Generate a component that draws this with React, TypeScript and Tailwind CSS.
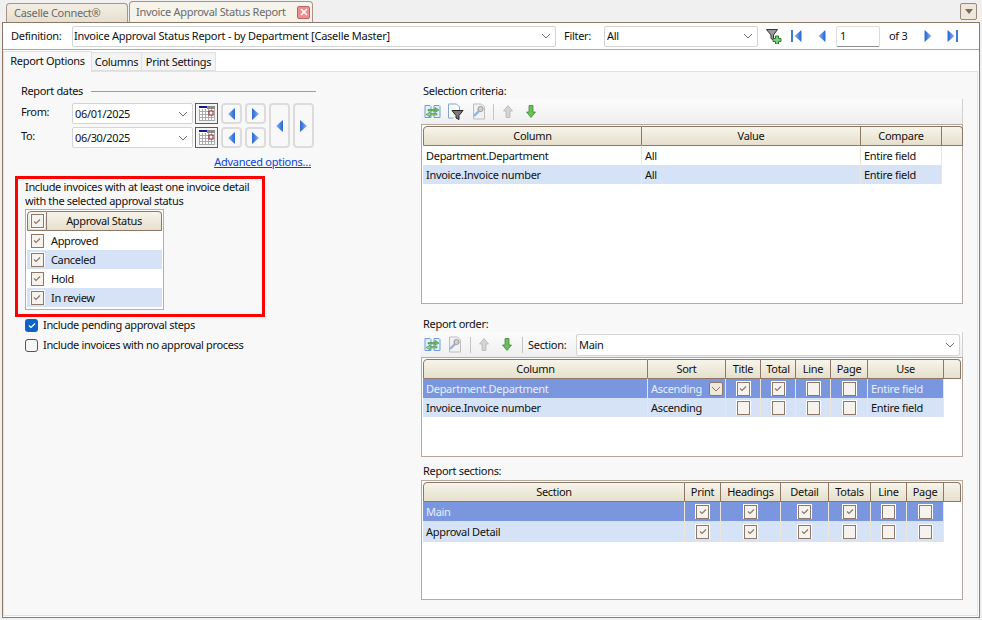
import React from "react";

const Tri = ({ dir, w = 8, h = 14 }: { dir: "l" | "r"; w?: number; h?: number }) => (
  <svg width={w} height={h} viewBox="0 0 8 14" className="block">
    <defs>
      <linearGradient id="triL" x1="0" x2="1" y1="0" y2="0">
        <stop offset="0" stopColor="#8db4f2" />
        <stop offset="1" stopColor="#1f62d6" />
      </linearGradient>
      <linearGradient id="triR" x1="0" x2="1" y1="0" y2="0">
        <stop offset="0" stopColor="#1f62d6" />
        <stop offset="1" stopColor="#8db4f2" />
      </linearGradient>
    </defs>
    {dir === "l" ? <polygon points="8,0 8,14 0,7" fill="url(#triL)" /> : <polygon points="0,0 0,14 8,7" fill="url(#triR)" />}
  </svg>
);

const Chevron = ({ color = "#6b6b6b" }: { color?: string }) => (
  <svg width="10" height="6" viewBox="0 0 10 6" className="block">
    <path d="M1 1l4 4 4-4" fill="none" stroke={color} strokeWidth="1" />
  </svg>
);

const Select = ({ children, className }: { children: React.ReactNode; className: string }) => (
  <div className={`flex items-center justify-between border border-[#d4d4d4] rounded-[2px] bg-white pr-[4px] ${className}`}>
    <span className="truncate">{children}</span>
    <Chevron />
  </div>
);

const Check = ({ on = false }: { on?: boolean }) => (
  <span className="inline-flex items-center justify-center size-[15px] border border-white bg-white">
    <span className="flex items-center justify-center size-[14px] border border-[#8d7868] bg-[#f6f3ef]">
      {on && (
        <svg width="8" height="7" viewBox="0 0 8 7" className="block">
          <path d="M1 3.5l2 2 4-4" fill="none" stroke="#8d7868" strokeWidth="1.2" />
        </svg>
      )}
    </span>
  </span>
);

const CalIcon = () => (
  <div className="flex items-center justify-center w-[23px] h-[21px] border border-[#5c5c5c] bg-[#f4f4f4]">
    <svg width="16" height="15" viewBox="0 0 16 15" className="block">
      <rect x="0" y="0" width="16" height="15" fill="#fff" />
      <rect x="0" y="0" width="8" height="2" fill="#1a1a8c" />
      <rect x="8" y="0" width="8" height="3" fill="#8a8a8a" />
      <path d="M0.5 3v12M3.5 3v12M6.5 3v12M9.5 3v12M12.5 3v12M15.5 3v12M0 5.5h16M0 8.5h16M0 11.5h16M0 14.5h16" stroke="#a8a8a8" strokeWidth="1" />
      <rect x="10" y="5" width="4" height="4" fill="#fff" stroke="#8b1a1a" strokeWidth="1" />
    </svg>
  </div>
);

const ArrowBtn = ({ dir, big = false }: { dir: "l" | "r"; big?: boolean }) => (
  <div className={`flex items-center justify-center border-2 border-[#dcdcdc] rounded-[4px] ${big ? "w-[21px] h-[45px]" : "w-[21px] h-[21px]"}`}>
    <Tri dir={dir} w={7} h={12} />
  </div>
);

const ImportIcon = () => (
  <svg width="17" height="15" viewBox="0 0 17 15" className="block">
    <path d="M1 1.5h5l1 1v11H1zM10 1.5h5l1 1v11h-6z" fill="#e3eefb" stroke="#6f9fd8" strokeWidth="1" />
    <path d="M4 5.5h7V3.5L15 6l-4 2.5v-1.5H4z" fill="#6cc05a" stroke="#2e7d32" strokeWidth=".5" />
    <path d="M13 9.5H6V8l-4 2.5L6 13v-2h7z" fill="#8ed47e" stroke="#2e7d32" strokeWidth=".5" />
  </svg>
);

const FilterPageIcon = () => (
  <svg width="17" height="17" viewBox="0 0 17 17" className="block">
    <path d="M1.5 1h8l3 3v5M1.5 1v14h5" fill="#fff" stroke="#7fa6dc" strokeWidth="1" />
    <path d="M5 7.5h11l-4 5v4l-3-1.5v-2.5z" fill="#7a7a7a" stroke="#222" strokeWidth="1" />
  </svg>
);

const KeyPageIcon = () => (
  <svg width="16" height="17" viewBox="0 0 16 17" className="block">
    <path d="M2.5 1h8l3 3v12h-11z" fill="#f2f2f2" stroke="#bdbdbd" strokeWidth="1" />
    <path d="M3 13l5-5" stroke="#8fb1e6" strokeWidth="2.4" />
    <circle cx="9.5" cy="6" r="2.6" fill="#d0d0d0" stroke="#9a9a9a" strokeWidth="1" />
  </svg>
);

const VArrow = ({ up, color, stroke }: { up?: boolean; color: string; stroke: string }) => (
  <svg width="10" height="13" viewBox="0 0 10 13" className="block">
    <path d={up ? "M5 .5L9.5 6H7v6.5H3V6H.5z" : "M5 12.5L9.5 7H7V.5H3V7H.5z"} fill={color} stroke={stroke} strokeWidth=".7" />
  </svg>
);

const Sep = ({ cls }: { cls: string }) => <div className={`w-px h-[16px] bg-[#c4c4c4] ${cls}`} />;

const HCell = ({ children, cls = "" }: { children?: React.ReactNode; cls?: string }) => (
  <div className={`flex items-center justify-center h-[20px] border-r border-b border-[#8d7868] bg-gradient-to-b from-[#f7f4ea] to-[#e6dfcc] ${cls}`}>{children}</div>
);

const Cell = ({ children, sel, center }: { children?: React.ReactNode; sel?: boolean; center?: boolean }) => (
  <div className={`flex items-center min-h-[19px] border-r border-[#ece6d8] ${center ? "justify-center" : "pl-[3px]"} ${sel ? "text-[#e9effc]" : ""}`}>{children}</div>
);

const Row = ({ cols, kind, tall, children }: { cols: string; kind: "w" | "a" | "s"; tall?: boolean; children: React.ReactNode }) => (
  <div className={`grid ${cols} ${tall ? "h-[21px]" : "h-[19px]"} ${kind === "a" ? "bg-[#d6e3f6]" : kind === "s" ? "bg-[#7a96de]" : "bg-white"}`}>{children}</div>
);

const Toolbar = ({ children }: { children: React.ReactNode }) => (
  <div className="flex items-center h-[25px] pl-[3px] border-r border-[#d0d0d0] bg-gradient-to-b from-[#fcfcfc] to-[#efefef]">{children}</div>
);

const Table = ({ h, children }: { h: string; children: React.ReactNode }) => (
  <div className={`border border-[#b6a99e] bg-white pl-px pt-px ${h}`}>{children}</div>
);

const sc = "grid-cols-[219px_219px_81px_21px]";
const oc = "grid-cols-[225px_78px_35px_35px_35px_37px_76px_17px]";
const rc = "grid-cols-[262px_36px_60px_48px_42px_36px_37px_17px]";

export default function App() {
  return (
    <div className="relative w-[982px] h-[620px] overflow-hidden bg-[#f0f0f0] text-[11px] leading-[14px] text-[#111] font-['Noto_Sans',sans-serif] tracking-[-0.3px]">
      <div className="flex items-end h-[22px] pl-[6px]">
        <div className="flex items-center w-[122px] h-[19px] pl-[7px] border border-b-0 border-[#a89484] rounded-t-[4px] bg-gradient-to-b from-[#f3efe4] to-[#e6dfcf] text-[#6a6a6a] whitespace-nowrap">Caselle Connect®</div>
        <div className="flex items-center w-[184px] h-[21px] ml-px pl-[6px] border border-b-0 border-[#a89484] rounded-t-[4px] bg-[#f6f3ea] text-[#6a6a6a] whitespace-nowrap">
          <span>Invoice Approval Status Report</span>
          <span className="flex items-center justify-center ml-auto mr-[2px] size-[13px] rounded-[2px] border border-[#b76a6a] bg-[#f28c8c]">
            <svg width="8" height="8" viewBox="0 0 8 8"><path d="M1 1l6 6M7 1l-6 6" stroke="#fff" strokeWidth="1.6" /></svg>
          </span>
        </div>
        <div className="flex items-center justify-center w-[17px] h-[17px] ml-auto mr-[5px] mb-[2px] border border-[#9b8878] rounded-[2px] bg-[#eee8da]">
          <svg width="8" height="5" viewBox="0 0 8 5"><polygon points="0,0 8,0 4,5" fill="#7d6a5c" /></svg>
        </div>
      </div>

      <div className="mx-[2px] h-[596px] border border-[#8d7868] bg-white flex flex-col">
        <div className="flex items-center h-[27px] border-b border-[#a8a8a8] pl-[8px] shrink-0">
          <span className="w-[61px]">Definition:</span>
          <Select className="w-[484px] h-[21px] pl-[1px] tracking-[-0.25px]">Invoice Approval Status Report - by Department [Caselle Master]</Select>
          <span className="w-[40px] ml-[8px]">Filter:</span>
          <Select className="w-[154px] h-[21px] pl-[2px]">All</Select>
          <span className="ml-[8px]">
            <svg width="16" height="16" viewBox="0 0 16 16" className="block">
              <path d="M.5 1.5h11L7.5 7v5L5 10.5V7z" fill="#9a9a9a" stroke="#333" strokeWidth="1" />
              <path d="M9.5 8h3v2.5H15v3h-2.5V16h-3v-2.5H7v-3h2.5z" fill="#7fce7f" stroke="#2c7a2c" strokeWidth="1" />
            </svg>
          </span>
          <span className="flex items-center ml-[9px]"><span className="w-[2px] h-[12px] mr-[1px] bg-[#3f79dc]" /><Tri dir="l" w={8} h={12} /></span>
          <span className="ml-[16px]"><Tri dir="l" w={8} h={12} /></span>
          <span className="flex items-center w-[44px] h-[21px] ml-[10px] pl-[3px] border border-[#dcdcdc] border-b-[#8c8c8c] rounded-[2px]">1</span>
          <span className="ml-[9px]">of 3</span>
          <span className="ml-[17px]"><Tri dir="r" w={8} h={12} /></span>
          <span className="flex items-center ml-[15px]"><Tri dir="r" w={8} h={12} /><span className="w-[2px] h-[12px] ml-px bg-[#3f79dc]" /></span>
        </div>

        <div className="flex items-end h-[21px] shrink-0">
          <div className="flex items-start justify-center pt-[2px] w-[89px] h-[21px] relative top-px z-10 border border-b-0 border-[#e0e0e0] bg-[#f8f8f8]">Report Options</div>
          <div className="flex items-center justify-center w-[50px] h-[19px] border border-[#e0e0e0] border-l-0 bg-[#f3f3f3]">Columns</div>
          <div className="flex items-center justify-center w-[74px] h-[19px] border border-[#e0e0e0] border-l-0 bg-[#f3f3f3]">Print Settings</div>
        </div>

        <div className="flex flex-1 min-h-0 mr-[1px] mb-[1px] border border-[#e2e2e2] bg-[#f8f8f8]">
          <div className="w-[417px] shrink-0 tracking-[-0.35px]">
            <div className="flex items-center mt-[12px] ml-[17px] h-[14px]">
              <span>Report dates</span>
              <span className="flex-1 h-px ml-[8px] mr-[105px] bg-[#9d9d9d]" />
            </div>
            <div className="flex mt-[5px] ml-[17px]">
              <div className="flex flex-col gap-[3px] w-[51px] pt-[2px]">
                <span className="h-[21px]">From:</span>
                <span className="h-[21px]">To:</span>
              </div>
              <div className="flex flex-col gap-[3px]">
                {["06/01/2025", "06/30/2025"].map((d) => (
                  <div key={d} className="flex items-center">
                    <Select className="w-[121px] h-[21px] mr-[2px] pl-[2px]">{d}</Select>
                    <CalIcon />
                    <div className="flex gap-[3px] ml-[3px]">
                      <ArrowBtn dir="l" />
                      <ArrowBtn dir="r" />
                    </div>
                  </div>
                ))}
              </div>
              <div className="flex gap-[3px] ml-[3px]">
                <ArrowBtn dir="l" big />
                <ArrowBtn dir="r" big />
              </div>
            </div>
            <div className="mt-[5px] ml-[207px] w-[100px] text-right text-[#0b3fd8] underline whitespace-nowrap tracking-[-0.25px]">Advanced options…</div>

            <div className="w-[250px] h-[141px] mt-[7px] ml-[11px] border-[3px] border-[#ff0000] pl-[7px] pt-px">
              <div>Include invoices with at least one invoice detail</div>
              <div>with the selected approval status</div>
              <div className="w-[139px] h-[101px] mt-[1px] border border-[#b8ad9f] bg-white p-px">
                <div className="grid grid-cols-[20px_1fr]">
                  <HCell cls="rounded-tl-[4px] border-l border-t"><Check on /></HCell>
                  <HCell cls="rounded-tr-[4px] border-t">Approval Status</HCell>
                </div>
                {["Approved", "Canceled", "Hold", "In review"].map((s, i) => (
                  <div key={s} className={`grid grid-cols-[20px_1fr] ${i % 2 ? "bg-[#d6e3f6]" : "bg-white"}`}>
                    <div className="flex items-center justify-center h-[19px]"><Check on /></div>
                    <div className="flex items-center h-[19px] pl-[4px]">{s}</div>
                  </div>
                ))}
              </div>
            </div>

            <div className="flex items-center h-[14px] mt-[1px] ml-[21px]">
              <span className="flex items-center justify-center size-[13px] rounded-[3px] bg-[#0f63c8]">
                <svg width="8" height="7" viewBox="0 0 8 7"><path d="M1 3.5l2 2 4-4" fill="none" stroke="#fff" strokeWidth="1.2" /></svg>
              </span>
              <span className="ml-[5px]">Include pending approval steps</span>
            </div>
            <div className="flex items-center h-[14px] mt-[6px] ml-[21px]">
              <span className="size-[13px] rounded-[3px] border border-[#555] bg-[#f6f6f6]" />
              <span className="ml-[5px]">Include invoices with no approval process</span>
            </div>
          </div>

          <div className="w-[542px] shrink-0">
            <div className="mt-[12px] h-[14px] pl-[2px]">Selection criteria:</div>
            <div className="mt-[1px]">
              <Toolbar>
                <ImportIcon />
                <span className="ml-[6px]"><FilterPageIcon /></span>
                <span className="ml-[7px]"><KeyPageIcon /></span>
                <Sep cls="ml-[6px]" />
                <span className="ml-[9px]"><VArrow up color="#d4d4d4" stroke="#b0b0b0" /></span>
                <span className="ml-[13px]"><VArrow color="#6cc05a" stroke="#2f7d2f" /></span>
              </Toolbar>
            </div>
            <Table h="h-[180px]">
              <div className={`grid ${sc}`}>
                <HCell cls="rounded-tl-[4px] border-l border-t">Column</HCell>
                <HCell cls="border-t">Value</HCell>
                <HCell cls="border-t">Compare</HCell>
                <HCell cls="rounded-tr-[4px] border-t" />
              </div>
              <div className="w-[519px]">
                <Row cols={sc} kind="w"><Cell>Department.Department</Cell><Cell>All</Cell><Cell>Entire field</Cell></Row>
                <Row cols={sc} kind="a"><Cell>Invoice.Invoice number</Cell><Cell>All</Cell><Cell>Entire field</Cell></Row>
              </div>
            </Table>

            <div className="mt-[13px] h-[14px] pl-[2px]">Report order:</div>
            <div className="mt-[1px]">
              <Toolbar>
                <ImportIcon />
                <span className="ml-[6px]"><KeyPageIcon /></span>
                <Sep cls="ml-[7px]" />
                <span className="ml-[8px]"><VArrow up color="#d4d4d4" stroke="#b0b0b0" /></span>
                <span className="ml-[13px]"><VArrow color="#6cc05a" stroke="#2f7d2f" /></span>
                <Sep cls="ml-[10px]" />
                <span className="ml-[5px] w-[48px]">Section:</span>
                <Select className="w-[384px] h-[22px] pl-[2px]">Main</Select>
              </Toolbar>
            </div>
            <Table h="h-[100px]">
              <div className={`grid ${oc}`}>
                <HCell cls="rounded-tl-[4px] border-l border-t">Column</HCell>
                <HCell cls="border-t">Sort</HCell>
                <HCell cls="border-t">Title</HCell>
                <HCell cls="border-t">Total</HCell>
                <HCell cls="border-t">Line</HCell>
                <HCell cls="border-t">Page</HCell>
                <HCell cls="border-t">Use</HCell>
                <HCell cls="rounded-tr-[4px] border-t" />
              </div>
              <div className="w-[521px]">
                <Row cols={oc} kind="s">
                  <Cell sel>Department.Department</Cell>
                  <div className="flex items-center justify-between h-[19px] pl-[3px] pr-[2px] border-r border-[#ece6d8] text-[#e9effc]">
                    <span>Ascending</span>
                    <span className="flex items-center justify-center size-[14px] rounded-[2px] border border-[#8d7868] bg-[#efe9dc]"><Chevron color="#8d7868" /></span>
                  </div>
                  <Cell center><Check on /></Cell><Cell center><Check on /></Cell><Cell center><Check /></Cell><Cell center><Check /></Cell><Cell sel>Entire field</Cell>
                </Row>
                <Row cols={oc} kind="a">
                  <Cell>Invoice.Invoice number</Cell><Cell>Ascending</Cell>
                  <Cell center><Check /></Cell><Cell center><Check /></Cell><Cell center><Check /></Cell><Cell center><Check /></Cell><Cell>Entire field</Cell>
                </Row>
              </div>
            </Table>

            <div className="mt-[7px] h-[14px] pl-[2px]">Report sections:</div>
            <div className="mt-[2px]">
              <Table h="h-[120px]">
                <div className={`grid ${rc}`}>
                  <HCell cls="rounded-tl-[4px] border-l border-t">Section</HCell>
                  <HCell cls="border-t">Print</HCell>
                  <HCell cls="border-t">Headings</HCell>
                  <HCell cls="border-t">Detail</HCell>
                  <HCell cls="border-t">Totals</HCell>
                  <HCell cls="border-t">Line</HCell>
                  <HCell cls="border-t">Page</HCell>
                  <HCell cls="rounded-tr-[4px] border-t" />
                </div>
                <div className="w-[521px]">
                  <Row cols={rc} kind="s">
                    <Cell sel>Main</Cell><Cell center><Check on /></Cell><Cell center><Check on /></Cell><Cell center><Check on /></Cell><Cell center><Check on /></Cell><Cell center><Check /></Cell><Cell center><Check /></Cell>
                  </Row>
                  <Row cols={rc} kind="a" tall>
                    <Cell>Approval Detail</Cell><Cell center><Check on /></Cell><Cell center><Check on /></Cell><Cell center><Check on /></Cell><Cell center><Check /></Cell><Cell center><Check /></Cell><Cell center><Check /></Cell>
                  </Row>
                </div>
              </Table>
            </div>
          </div>
        </div>
      </div>
    </div>
  );
}
